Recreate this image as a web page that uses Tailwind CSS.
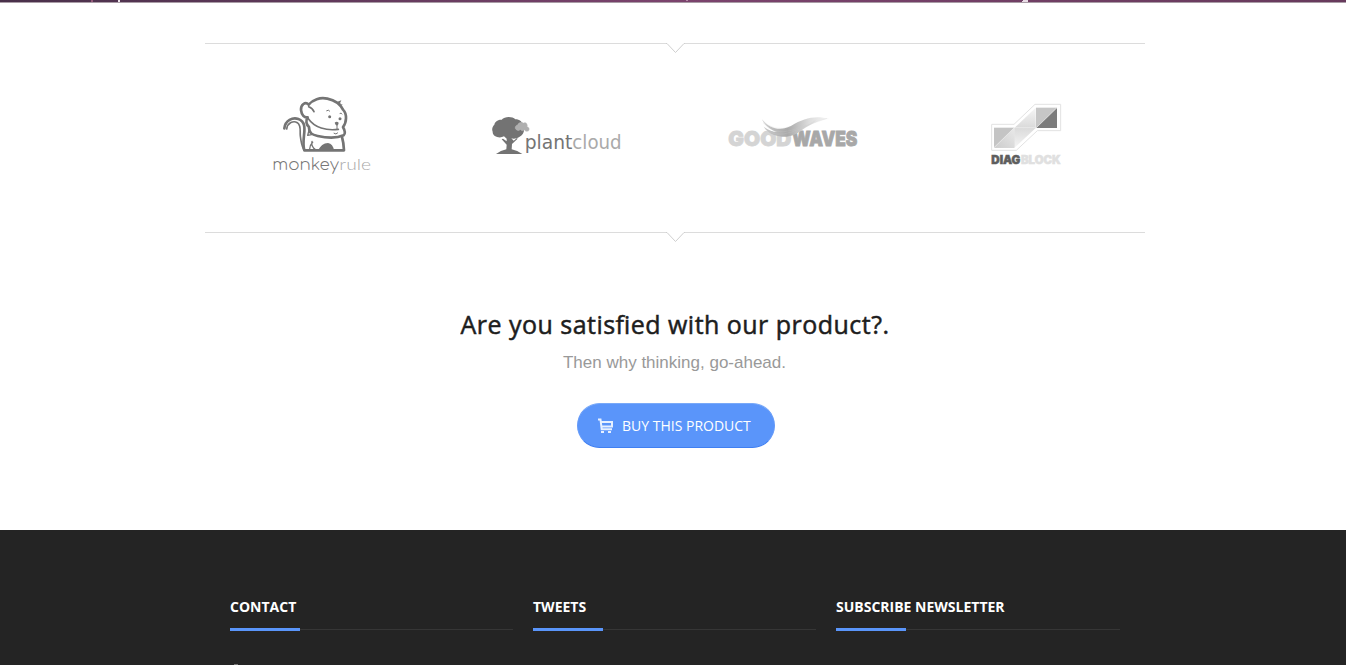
<!DOCTYPE html>
<html lang="en">
<head>
<meta charset="utf-8">
<title>Product</title>
<script src="https://cdn.jsdelivr.net/npm/@tailwindcss/browser@4"></script>
</head>
<body class="bg-white h-[665px] overflow-hidden font-['Open_Sans',sans-serif]">
<div class="h-[3px] border-b border-[#a99ca6] bg-linear-to-r from-[#49304a] via-[#7b436d] to-[#673a5c]">
  <svg class="block" width="1346" height="2"><path d="M91 0h2v2h-2z" fill="#94597a"/><path d="M118 0h2v2h-2z" fill="#efe5ed"/><path d="M686 0h2v1h-2z" fill="#b68ba8"/><path d="M1023 0h5v2h-6v-1h1z" fill="#e9dce6"/></svg>
</div>
<main class="mx-auto w-[940px] h-[527px] pt-10 relative left-[2px]">
  <div class="flex h-[10px]"><div class="flex-1 border-t border-[#dcdcdc]"></div><svg width="19" height="10" fill="none" stroke="#cfcfcf"><path d="M0 .5h1l8.5 9l8.5-9h1"/></svg><div class="w-[460px] border-t border-[#dcdcdc]"></div></div>
  <div class="h-[179px] pt-[37px] grid grid-cols-4 justify-items-center">
    <svg class="h-[90px] w-[125px]" viewBox="0 0 375 270">
      <g fill="none" stroke="#747474" stroke-width="8" stroke-linecap="round" stroke-linejoin="round">
        <path d="M73 115C76 91 98 81 115 87C135 94 135 114 132 136C130 154 129 168 133 181H252C251 163 249 151 246 141"/>
        <path d="M80 117C83 98 100 91 112 98C125 107 119 125 121 138Q124 165 131 178" stroke-width="5"/>
        <path d="M146 44C136 33 122 44 123 60C125 76 133 84 143 82C136 91 139 104 147 111C147 130 156 134 173 138C195 143 229 146 251 136C258 130 254 120 249 111C260 98 262 72 249 59C240 41 221 30 202 26C180 21 158 29 146 44Z"/>
        <path d="M146 50C152 52 159 58 162 65" stroke-width="5"/>
        <path d="M145 86C164 113 199 123 235 118" stroke-width="5"/>
        <path d="M231 104V116M222 130q6 5 11-1M240 70q4-3 6 2M200 62q6-4 9 1" stroke-width="3"/>
        <path d="M148 117L143 136L155 134M156 154C153 165 159 174 168 180M158 157q-8 8-9 20" stroke-width="4"/>
      </g>
      <g fill="#747474"><path d="M224 98q6-5 12 0q0 6-5 9q-5-2-7-9zM174 182c7-14 17-23 30-23q15 2 18 23zM228 37L244 31L240 40L249 45L235 43z"/><circle cx="209" cy="80" r="4.5"/><circle cx="240" cy="86" r="4.5"/></g>
      <text x="37" y="241" font-family="Comfortaa,Lato,sans-serif" font-weight="300" font-size="49" textLength="200" lengthAdjust="spacingAndGlyphs" fill="#777">monkey</text><text x="238" y="241" font-family="Lato,sans-serif" font-weight="300" font-size="49" textLength="95" lengthAdjust="spacingAndGlyphs" fill="#aaa">rule</text>
    </svg>
    <svg class="w-[155px] h-[60px] mt-[15px]" viewBox="0 0 465 180">
      <path fill="#737373" d="M72 94C58 102 37 94 38 80C34 72 39 62 43 59C45 48 57 43 65 44C74 34 97 34 106 43C119 43 128 51 129 61C137 76 129 90 121 94C114 101 99 103 94 100L101 107L111 99L113 101L96 117L95 133Q112 136 127 147H48Q62 136 79 133L80 119L65 103L69 101L80 109V101Z"/>
      <path fill="#afafaf" stroke="#c8c8c8" stroke-width="1" d="M111 75C102 72 106 60 113 60C115 51 128 50 130 54C137 49 144 57 142 65C151 67 149 80 141 79C136 80 135 76 133 75C127 80 122 76 121 73C118 78 113 77 111 75Z"/>
      <text x="134" y="133" font-family="DejaVu Sans,sans-serif" font-size="57" textLength="143" lengthAdjust="spacingAndGlyphs" fill="#747474">plant</text><text x="277" y="133" font-family="DejaVu Sans,sans-serif" font-size="57" textLength="148" lengthAdjust="spacingAndGlyphs" fill="#aaa">cloud</text>
    </svg>
    <svg class="w-[145px] h-[60px] mt-[15px] overflow-visible" viewBox="0 0 435 180">
      <defs><linearGradient id="wave"><stop stop-color="#ccc"/><stop offset=".38" stop-color="#aaa"/><stop offset=".7" stop-color="#ddd"/><stop offset="1" stop-color="#f6f6f6"/></linearGradient><filter id="soft"><feGaussianBlur stdDeviation="2"/></filter></defs>
      <g font-family="Inter,Liberation Sans,sans-serif" font-weight="900" font-size="61" stroke-width="2.5"><text x="25" y="124" textLength="189" lengthAdjust="spacingAndGlyphs" fill="#d4d4d4" stroke="#d4d4d4">GOOD</text><text x="216" y="124" textLength="196" lengthAdjust="spacingAndGlyphs" fill="#a8a8a8" stroke="#a8a8a8">WAVES</text></g>
      <path filter="url(#soft)" fill="url(#wave)" d="M126 44C150 72 183 79 214 62C253 39 286 30 328 42C298 43 275 57 249 73C217 99 191 99 162 90C147 84 138 75 131 65C145 75 159 81 172 81C150 74 137 62 126 44Z"/>
      <path fill="none" stroke="#c9c9c9" opacity=".7" d="M126 44Q160 84 214 64M129 53Q160 92 214 76T321 40M134 70Q165 99 215 81T286 47"/>
    </svg>
    <svg class="w-[90px] h-[80px] mt-[5px]" viewBox="9 0 270 240">
      <defs><linearGradient id="tile" x1="0" y1="1" x2="1" y2="0"><stop stop-color="#ccc"/><stop offset="1" stop-color="#e9e9e9"/></linearGradient><linearGradient id="ribbon" x1="0" y1="1" x2="0" y2="0"><stop stop-color="#f4f4f4"/><stop offset=".5" stop-color="#dadada"/><stop offset="1" stop-color="#f6f6f6"/></linearGradient></defs>
      <path d="M35 88H102L165 28H242V107H172L109 166H35Z" fill="#fff" stroke="#e2e2e2" stroke-width="3"/>
      <path d="M104 98L167 38V99L104 158Z" fill="url(#ribbon)"/>
      <path d="M42 98H103V158H42Z" fill="#c4c4c4"/><path d="M42 158L103 98V158Z" fill="url(#tile)"/>
      <path d="M168 38H231V99H168Z" fill="#c6c6c6"/><path d="M168 99L231 38V99Z" fill="#7c7c7c"/><path d="M42 158L103 98M168 99L231 38" stroke="#f4f4f4" stroke-width="2"/><path d="M104 98L167 98" stroke="#eee" stroke-width="2"/>
      <g font-family="Inter,sans-serif" font-weight="900" font-size="34" stroke-width="1.5"><text x="34" y="206" textLength="87" lengthAdjust="spacingAndGlyphs" fill="#5e5e5e" stroke="#5e5e5e">DIAG</text><text x="123" y="206" textLength="119" lengthAdjust="spacingAndGlyphs" fill="#e0e0e0" stroke="#e0e0e0">BLOCK</text></g>
    </svg>
  </div>
  <div class="flex h-[10px]"><div class="flex-1 border-t border-[#dcdcdc]"></div><svg width="19" height="10" fill="none" stroke="#cfcfcf"><path d="M0 .5h1l8.5 9l8.5-9h1"/></svg><div class="w-[460px] border-t border-[#dcdcdc]"></div></div>
  <section class="pt-[65px] flex flex-col items-center">
    <h2 class="text-[25px] leading-9 text-[#1d1d1d] whitespace-nowrap"><svg class="block" width="430" height="36"><text x="0.5" y="27" textLength="428.5" fill="currentColor" stroke="currentColor" stroke-width=".5" font-weight="400">Are you satisfied with our product?.</text></svg></h2>
    <p class="relative -left-[0.5px] mt-2 font-['Liberation_Sans',sans-serif] text-[17px] leading-6 text-[#999]">Then why thinking, go-ahead.</p>
    <a class="relative left-px mt-[28px] flex h-[45px] w-[198px] items-center rounded-full bg-[#5a95fa] border border-t-[#79a9f8] border-x-[#659af8] border-b-[#3f7ff2] pl-5 text-[14px] text-white">
      <svg class="mr-2 shrink-0" width="16" height="16" fill="none" stroke="#e6f0ff" stroke-width="2"><path d="M0 1.5h2.5l1.2 9.7H14M3 4h11v4.5H4"/><path fill="#e6f0ff" stroke="none" d="M3 13h3v2H3zM10 13h3v2h-3z"/></svg>
      <span class="whitespace-nowrap">BUY THIS PRODUCT</span>
    </a>
  </section>
</main>
<footer class="h-[135px] bg-[#242424] pt-[66px] pl-[230px] flex gap-5 text-white text-[14px] leading-[22px] font-bold">
  <div class="w-[283px]"><h3 class="h-[34px] border-b border-[#363636]">CONTACT</h3><div class="h-[3px] w-[70px] -mt-[2px] bg-[#5a95fa] relative"></div><div class="mt-[33px] ml-1 h-2 w-1 bg-[#777]"></div></div>
  <div class="w-[283px]"><h3 class="h-[34px] border-b border-[#363636]">TWEETS</h3><div class="h-[3px] w-[70px] -mt-[2px] bg-[#5a95fa] relative"></div></div>
  <div class="w-[284px]"><h3 class="h-[34px] border-b border-[#363636]">SUBSCRIBE NEWSLETTER</h3><div class="h-[3px] w-[70px] -mt-[2px] bg-[#5a95fa] relative"></div></div>
</footer>
</body>
</html>
